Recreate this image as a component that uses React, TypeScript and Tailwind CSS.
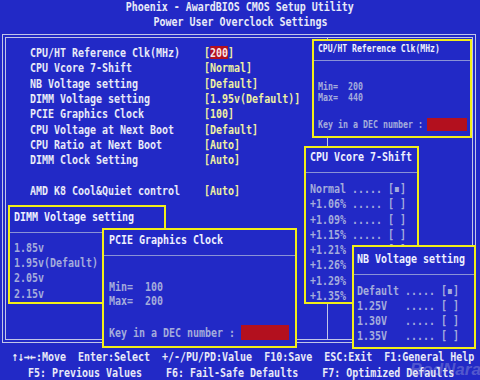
import React from "react";

function T({ children, c = "" }: { children: React.ReactNode; c?: string }) {
  return (
    <span className={`inline-block whitespace-pre origin-left scale-x-[0.767] ${c}`}>
      {children}
    </span>
  );
}

function Box({ pos, children }: { pos: string; children: React.ReactNode }) {
  return (
    <div className={`absolute border-2 border-[#f2ee1a] bg-[#2229c6] ${pos}`}>{children}</div>
  );
}

const RED = "bg-[#b3101e]";

const ROWS: [string, React.ReactNode][] = [
  [
    "CPU/HT Reference Clk(MHz)",
    <>
      [<span className={`inline-block h-[13px] leading-[13px] ${RED} text-[#f8e6e6]`}>200</span>]
    </>,
  ],
  ["CPU Vcore 7-Shift", "[Normal]"],
  ["NB Voltage setting", "[Default]"],
  ["DIMM Voltage setting", "[1.95v(Default)]"],
  ["PCIE Graphics Clock", "[100]"],
  ["CPU Voltage at Next Boot", "[Default]"],
  ["CPU Ratio at Next Boot", "[Auto]"],
  ["DIMM Clock Setting", "[Auto]"],
  ["", ""],
  ["AMD K8 Cool&Quiet control", "[Auto]"],
];

const VCORE = [
  "Normal ..... [▪]",
  "+1.06% ..... [ ]",
  "+1.09% ..... [ ]",
  "+1.15% ..... [ ]",
  "+1.21% ..... [ ]",
  "+1.26% ..... [ ]",
  "+1.29% ..... [ ]",
  "+1.35% ..... [ ]",
];

const NB = ["Default ..... [▪]", "1.25V   ..... [ ]", "1.30V   ..... [ ]", "1.35V   ..... [ ]"];

const DIMM = ["1.85v", "1.95v(Default)", "2.05v", "2.15v"];

export default function App() {
  return (
    <div className="relative w-[480px] h-[380px] overflow-hidden bg-[#2229c6] font-['DejaVu_Sans_Mono',monospace] font-bold text-[13px] text-[#e8eaf8]">
      {/* Header */}
      <div className="h-[34px] text-center">
        <div className="leading-[14px]">
          <span className="inline-block whitespace-pre origin-center scale-x-[0.767]">
            Phoenix - AwardBIOS CMOS Setup Utility
          </span>
        </div>
        <div className="leading-[16px]">
          <span className="inline-block whitespace-pre origin-center scale-x-[0.767]">
            Power User Overclock Settings
          </span>
        </div>
      </div>

      {/* Main frame */}
      <div className="ml-[2px] w-[474px] h-[309px] border border-[#c2c6e8] p-[2px]">
        <div className="h-full border border-[#c2c6e8] flex">
          <div className="w-[321px] shrink-0 pt-[7px] pl-[24px]">
            {ROWS.map(([label, value], i) => (
              <div key={i} className="h-[15.33px] leading-[15.33px]">
                <T>
                  <span className="text-[#e8eaf8]">{label.padEnd(29)}</span>
                  <span className="text-[#eef0a2]">{value}</span>
                </T>
              </div>
            ))}
          </div>
          <div className="flex-1 border-l border-[#c2c6e8]">
            <div className="h-[30px] border-b border-[#c2c6e8]" />
          </div>
        </div>
      </div>

      {/* Help bar */}
      <div className="pt-[6px] leading-[16px] text-[#e8eaf8]">
        <div className="pl-[12px]">
          <T>↑↓→←:Move  Enter:Select  +/-/PU/PD:Value  F10:Save  ESC:Exit  F1:General Help</T>
        </div>
        <div className="pl-[28px]">
          <T>F5: Previous Values    F6: Fail-Safe Defaults    F7: Optimized Defaults</T>
        </div>
      </div>

      {/* Popup: CPU/HT Reference Clk */}
      <Box pos="left-[312px] top-[39px] w-[160px] h-[99px]">
        <div className="h-[20px] border-b border-[#8a92d6] pt-[1px] pl-[4px] leading-[14px] text-[11px] text-[#eef0ff]">
          <span className="inline-block whitespace-pre origin-left scale-x-[0.736]">
            CPU/HT Reference Clk(MHz)
          </span>
        </div>
        <div className="pl-[4px] pt-[20px] text-[10px] leading-[11px] text-[#a4acdc]">
          <div>
            <span className="inline-block whitespace-pre origin-left scale-x-[0.83]">Min=  200</span>
          </div>
          <div>
            <span className="inline-block whitespace-pre origin-left scale-x-[0.83]">Max=  440</span>
          </div>
          <div className="mt-[15px] flex items-center h-[13px]">
            <div className="w-[109px] shrink-0">
              <span className="inline-block whitespace-pre origin-left scale-x-[0.83]">
                Key in a DEC number :
              </span>
            </div>
            <div className={`w-[40px] h-[13px] shrink-0 ${RED}`} />
          </div>
        </div>
      </Box>

      {/* Popup: DIMM Voltage */}
      <Box pos="left-[8px] top-[205px] w-[158px] h-[99px]">
        <div className="h-[26px] border-b border-[#8a92d6] pt-[2px] pl-[4px] leading-[16px] text-[#eef0ff]">
          <T>DIMM Voltage setting</T>
        </div>
        <div className="pl-[4px] pt-[7px] leading-[15.2px] text-[#a4acdc]">
          {DIMM.map((d) => (
            <div key={d}>
              <T>{d}</T>
            </div>
          ))}
        </div>
      </Box>

      {/* Popup: PCIE Graphics Clock */}
      <Box pos="left-[102px] top-[228px] w-[195px] h-[120px]">
        <div className="h-[26px] border-b border-[#8a92d6] pt-[2px] pl-[5px] leading-[16px] text-[#eef0ff]">
          <T>PCIE Graphics Clock</T>
        </div>
        <div className="pl-[5px] pt-[24px] leading-[14px] text-[#a4acdc]">
          <div>
            <T>Min=  100</T>
          </div>
          <div>
            <T>Max=  200</T>
          </div>
          <div className="mt-[17px] flex items-center h-[15px]">
            <div className="w-[132px] shrink-0">
              <T>Key in a DEC number :</T>
            </div>
            <div className={`w-[48px] h-[15px] shrink-0 ${RED}`} />
          </div>
        </div>
      </Box>

      {/* Popup: CPU Vcore 7-Shift */}
      <Box pos="left-[304px] top-[146px] w-[115px] h-[158px]">
        <div className="h-[25px] border-b border-[#8a92d6] pt-[1px] pl-[4px] leading-[16px] text-[#eef0ff]">
          <T>CPU Vcore 7-Shift</T>
        </div>
        <div className="pl-[4px] pt-[8px] leading-[15.25px] text-[#a4acdc]">
          {VCORE.map((v) => (
            <div key={v}>
              <T>{v}</T>
            </div>
          ))}
        </div>
      </Box>

      {/* Popup: NB Voltage setting */}
      <Box pos="left-[352px] top-[245px] w-[124px] h-[104px]">
        <div className="h-[28px] border-b border-[#8a92d6] pt-[4px] pl-[3px] leading-[16px] text-[#eef0ff]">
          <T>NB Voltage setting</T>
        </div>
        <div className="pl-[3px] pt-[8px] leading-[15px] text-[#a4acdc]">
          {NB.map((v) => (
            <div key={v}>
              <T>{v}</T>
            </div>
          ))}
        </div>
      </Box>

      {/* Watermark */}
      <div className="absolute left-[410px] top-[361px] font-['Liberation_Sans',sans-serif] text-[17px] leading-[18px] font-bold italic text-[#d0d0e0]/30">
        BodNara
      </div>
    </div>
  );
}
